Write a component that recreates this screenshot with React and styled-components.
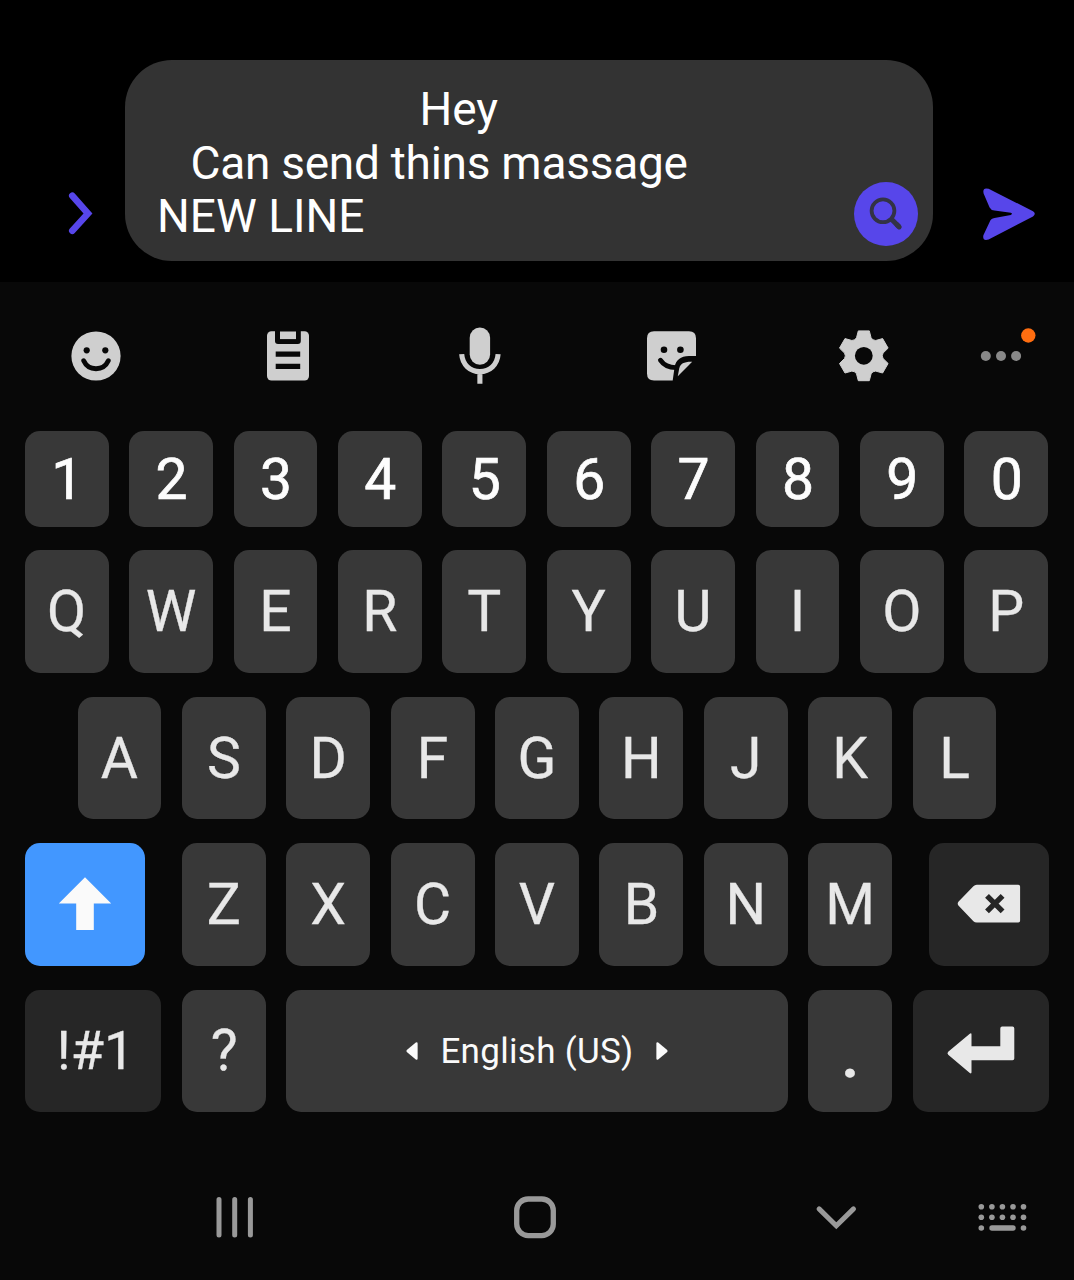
import React from "react";
import styled, { createGlobalStyle } from "styled-components";

const GlobalStyle = createGlobalStyle`
  *, *::before, *::after { box-sizing: border-box; }
  body { margin: 0; background: #080808; }
  button { border: 0; padding: 0; margin: 0; background: none; font: inherit; color: inherit; }
  svg { display: block; flex: none; overflow: visible; }
`;

const Screen = styled.main`
  display: flex;
  flex-direction: column;
  width: 1074px;
  height: 1280px;
  overflow: hidden;
  background: #080808;
  font-family: Roboto, "Liberation Sans", sans-serif;
`;

const Composer = styled.section`
  display: flex;
  align-items: flex-end;
  height: 282px;
  padding: 60px 0 21px 50px;
  background: #000;
`;

const ComposerButton = styled.button`
  display: flex;
  align-items: center;
  justify-content: center;
  width: 60px;
  height: 60px;
  margin: ${(p) => p.$margin};
`;

const Bubble = styled.div`
  display: flex;
  align-items: flex-end;
  justify-content: space-between;
  width: 808px;
  height: 201px;
  margin-left: 15px;
  padding: 0 15px 15px 32px;
  border-radius: 47px;
  background: #333;
`;

const Message = styled.div`
  padding-bottom: 2px;
  white-space: pre;
  color: #fff;
  font-size: 46px;
  line-height: 53.7px;
`;

const Line = styled.div`
  letter-spacing: ${(p) => p.$tracking || 0}px;
`;

const SearchButton = styled.button`
  display: flex;
  width: 64px;
  height: 64px;
  border-radius: 50%;
  background: #5746ea;
`;

const Toolbar = styled.div`
  display: flex;
  align-items: center;
  height: 149px;
  padding-bottom: 2px;
`;

const Tool = styled.button`
  display: flex;
  justify-content: center;
  width: ${(p) => p.$width || 192}px;
  color: #cfcfcf;
`;

const Keys = styled.div`
  display: flex;
  flex-direction: column;
  gap: 23.8px;
  padding: 0 24.8px;
`;

const KeyRow = styled.div`
  display: flex;
  justify-content: ${(p) => p.$justify || "flex-start"};
  gap: 20.6px;
  height: ${(p) => p.$height || 122.6}px;
`;

const KeyGroup = styled.div`
  display: flex;
  gap: 20.6px;
`;

const tones = { key: "#383838", dark: "#262626", blue: "#4297ff" };

const Key = styled.button`
  display: flex;
  align-items: center;
  justify-content: center;
  flex: none;
  width: ${(p) => p.$width || 83.8}px;
  height: 100%;
  padding: ${(p) => p.$pad || "0"};
  border-radius: 15px;
  background: ${(p) => tones[p.$tone || "key"]};
  color: ${(p) => p.$color || "#e8e8e8"};
  font-size: ${(p) => p.$size || 57}px;
  font-weight: ${(p) => p.$weight || 400};
  line-height: 1;
  -webkit-text-stroke: ${(p) => p.$stroke || 0.3}px currentColor;
`;

const SpaceKey = styled(Key)`
  gap: 22px;
  color: #fafafa;
  font-size: 35px;
  letter-spacing: 0.3px;
  -webkit-text-stroke: 0;
`;

const SpaceLabel = styled.span`
  padding-top: 2px;
`;

const NavBar = styled.nav`
  display: flex;
  align-items: center;
  flex: 1;
  padding: 44px 0 0 205px;
  color: #999;
`;

const NavButton = styled.button`
  display: flex;
  width: 60px;
  height: 60px;
  margin-right: ${(p) => p.$after || 0}px;
`;

const Icon = ({ w = 60, h = 60, children }) => (
  <svg width={w} height={h} viewBox={`0 0 ${w} ${h}`} fill="currentColor">
    {children}
  </svg>
);

const BG = "#080808";

const ExpandIcon = () => (
  <Icon>
    <path d="M22.3 11.8 38 29.5 22.3 46.8" fill="none" stroke="#5746ea" strokeWidth="6.6" strokeLinecap="round" strokeLinejoin="miter" />
  </Icon>
);

const SearchIcon = () => (
  <Icon w={64} h={64}>
    <g fill="none" stroke="#333345">
      <circle cx="29" cy="28.8" r="11.4" strokeWidth="3.8" />
      <path d="M37.3 37 45 44.7" strokeWidth="5" />
      <path d="M43 42.7 45.2 44.9" strokeWidth="5" strokeLinecap="round" />
    </g>
  </Icon>
);

const SendIcon = () => (
  <Icon>
    <path
      d="M8.6 4.8 53 27.2Q56.6 29.8 53 32.4L8.6 55.6Q2.2 57.6 3.4 51.2L9.5 38.2Q10.8 34.6 14.5 34.1L30.8 30.9Q33.2 29.8 30.8 28.8L14.5 26.6Q11 26.1 9.6 23.4L3.6 9.4Q2.2 3 8.6 4.8Z"
      fill="#5746ea"
    />
  </Icon>
);

const EmojiIcon = () => (
  <Icon>
    <circle cx="30" cy="30" r="24.6" />
    <circle cx="20.7" cy="24.3" r="3.1" fill={BG} />
    <circle cx="39.3" cy="24.3" r="3.1" fill={BG} />
    <path d="M17.7 34.8A13.5 13.5 0 0 0 42.3 34.8" fill="none" stroke={BG} strokeWidth="4.8" strokeLinecap="round" />
  </Icon>
);

const ClipboardIcon = () => (
  <Icon>
    <rect x="9" y="5.3" width="42" height="49.3" rx="4.5" />
    <path d="M17 5H42.8V15Q42.8 18 39.8 18H20Q17 18 17 15Z" fill={BG} />
    <rect x="22" y="5.5" width="16" height="7.6" />
    <path d="M17.7 25.4H42.2V30.7H17.7ZM17.7 37.7H42.2V43H17.7Z" fill={BG} />
  </Icon>
);

const MicIcon = () => (
  <Icon>
    <rect x="19.7" y="1.6" width="20.4" height="37.2" rx="10.2" />
    <path d="M11.7 28.2C12.4 38.6 20 45.6 29.9 45.6S47.4 38.6 48.1 28.2M29.9 45V57.8" fill="none" stroke="currentColor" strokeWidth="5.1" />
  </Icon>
);

const StickerIcon = () => (
  <Icon>
    <path d="M12 5.3H47Q54 5.3 54 12.3V30.1H47C38.5 30.1 34 34.3 32.6 41L30.7 54.4H12Q5 54.4 5 47.4V12.3Q5 5.3 12 5.3Z" />
    <circle cx="22" cy="23.7" r="3.3" fill={BG} />
    <circle cx="38.4" cy="23.7" r="3.3" fill={BG} />
    <path d="M18.4 34.2Q23.6 42 35 41.6" fill="none" stroke={BG} strokeWidth="4.8" strokeLinecap="round" />
    <path d="M50.2 35.7C42 35.5 38.4 37.5 37.2 42.4L35.8 50.2Z" />
  </Icon>
);

/* One sixth of the gear outline, turned around the centre for each tooth. */
const gearPath = (() => {
  const turn = ([x, y], k) => {
    const a = (k * Math.PI) / 3;
    const px = 29.8 + x * Math.cos(a) - y * Math.sin(a);
    const py = 29.8 + x * Math.sin(a) + y * Math.cos(a);
    return `${px.toFixed(2)} ${py.toFixed(2)}`;
  };
  let d = "";
  for (let k = 0; k < 6; k += 1) {
    d += `${k ? "L" : "M"}${turn([-5.5, -24.9], k)}L${turn([5.5, -24.9], k)}L${turn([7.3, -18], k)}`;
    d += `Q${turn([8.8, -15.3], k)} ${turn([-7.3, -18], k + 1)}`;
  }
  return `${d}Z`;
})();

const GearIcon = () => (
  <Icon>
    <path d={gearPath} stroke="currentColor" strokeWidth="1" strokeLinejoin="round" />
    <circle cx="29.8" cy="29.8" r="8.9" fill={BG} />
  </Icon>
);

const MoreIcon = () => (
  <Icon>
    <g fill="#888">
      <circle cx="14.8" cy="30" r="5" />
      <circle cx="30" cy="30" r="5" />
      <circle cx="45.1" cy="30" r="5" />
    </g>
    <circle cx="57.3" cy="9.5" r="7.2" fill="#ff6d10" />
  </Icon>
);

const ShiftIcon = () => (
  <Icon>
    <path d="M30 3.2 56.2 29.6H38.8V56H21.2V29.6H3.8Z" fill="#fafafa" />
  </Icon>
);

const BackspaceIcon = () => (
  <Icon w={64} h={60}>
    <path d="M1.4 27.8 16.4 12.2Q17.8 10.7 19.8 10.7H61.3Q63.1 10.7 63.1 12.5V46.8Q63.1 48.6 61.3 48.6H19.8Q17.8 48.6 16.4 47.2L1.4 31.4Q0 29.6 1.4 27.8Z" />
    <path d="M30 21.8 45.6 37.4M45.6 21.8 30 37.4" stroke="#262626" strokeWidth="5.4" fill="none" />
  </Icon>
);

const EnterIcon = () => (
  <Icon w={68} h={60}>
    <path d="M1.2 30.8 22.8 12.7Q24.5 11.4 24.5 13.6V25.3H53.3V7.4Q53.3 5.6 55.1 5.6H65.5Q67.3 5.6 67.3 7.4V37.5Q67.3 39.3 65.5 39.3H24.5V51.3Q24.5 53.2 22.8 52L1.2 33.8Q-.3 32.3 1.2 30.8Z" />
  </Icon>
);

const ArrowIcon = ({ flip }) => (
  <Icon w={12} h={18}>
    <path
      d="M.8 8 9.8.4Q11.6-.4 11.6 1.5V16.5Q11.6 18.4 9.8 17.6L.8 10Q0 9 .8 8Z"
      transform={flip ? "matrix(-1 0 0 1 12 0)" : undefined}
    />
  </Icon>
);

const RecentsIcon = () => (
  <Icon>
    <path d="M14 11.6V47M29.7 11.6V47M45.4 11.6V47" stroke="currentColor" strokeWidth="5" strokeLinecap="round" />
  </Icon>
);

const HomeIcon = () => (
  <Icon>
    <rect x="11.7" y="11" width="36.6" height="36.6" rx="11.5" fill="none" stroke="currentColor" strokeWidth="5.3" />
  </Icon>
);

const HideIcon = () => (
  <Icon>
    <path d="M13.1 20.9 30.3 37.7 47.5 20.9" fill="none" stroke="currentColor" strokeWidth="5" strokeLinecap="round" />
  </Icon>
);

const KeyboardIcon = () => (
  <Icon>
    {[9.3, 19.9, 30.4, 41, 51.5].map((x, i) => (
      <React.Fragment key={x}>
        <circle cx={x} cy="18.7" r="2.8" />
        <circle cx={x} cy="29.3" r="2.8" />
        {(i === 0 || i === 4) && <circle cx={x} cy="40" r="2.8" />}
      </React.Fragment>
    ))}
    <rect x="17.3" y="37.3" width="26.4" height="5.4" rx="2.7" />
  </Icon>
);

const letters = (text) => text.split("").map((c) => <Key key={c}>{c}</Key>);

export default function App() {
  return (
    <Screen>
      <GlobalStyle />
      <Composer>
        <ComposerButton $margin="0 0 17px 0" aria-label="Expand"><ExpandIcon /></ComposerButton>
        <Bubble>
          <Message>
            <Line>{" ".repeat(23)}Hey</Line>
            <Line $tracking={-0.26}>{"   "}Can send thins massage</Line>
            <Line>NEW LINE</Line>
          </Message>
          <SearchButton aria-label="Search"><SearchIcon /></SearchButton>
        </Bubble>
        <ComposerButton $margin="0 0 17px 47px" aria-label="Send"><SendIcon /></ComposerButton>
      </Composer>

      <Toolbar>
        <Tool aria-label="Emoji"><EmojiIcon /></Tool>
        <Tool aria-label="Clipboard"><ClipboardIcon /></Tool>
        <Tool aria-label="Voice"><MicIcon /></Tool>
        <Tool aria-label="Stickers"><StickerIcon /></Tool>
        <Tool aria-label="Settings"><GearIcon /></Tool>
        <Tool $width={82} aria-label="More"><MoreIcon /></Tool>
      </Toolbar>

      <Keys>
        <KeyRow $height={95.6}>
          {"1234567890".split("").map((c) => (
            <Key key={c} $color="#fdfdfd" $pad="1px 0 0 1px" $stroke={0.7}>{c}</Key>
          ))}
        </KeyRow>
        <KeyRow>{letters("QWERTYUIOP")}</KeyRow>
        <KeyRow $justify="center">{letters("ASDFGHJKL")}</KeyRow>
        <KeyRow $justify="space-between">
          <Key $tone="blue" $width={120.6} aria-label="Shift"><ShiftIcon /></Key>
          <KeyGroup>{letters("ZXCVBNM")}</KeyGroup>
          <Key $tone="dark" $width={120.6} aria-label="Backspace"><BackspaceIcon /></Key>
        </KeyRow>
        <KeyRow $justify="space-between">
          <Key $tone="dark" $width={136.4} $size={54} $pad="0 0 0 5px">!#1</Key>
          <Key $pad="0 0 1px 1px">?</Key>
          <SpaceKey $width={501.6}>
            <ArrowIcon />
            <SpaceLabel>English (US)</SpaceLabel>
            <ArrowIcon flip />
          </SpaceKey>
          <Key $size={60} $weight={700} $pad="12px 0 0 0">.</Key>
          <Key $tone="dark" $width={136.4} aria-label="Enter"><EnterIcon /></Key>
        </KeyRow>
      </Keys>

      <NavBar>
        <NavButton $after={240} aria-label="Recents"><RecentsIcon /></NavButton>
        <NavButton $after={241} aria-label="Home"><HomeIcon /></NavButton>
        <NavButton $after={106} aria-label="Hide keyboard"><HideIcon /></NavButton>
        <NavButton aria-label="Switch keyboard"><KeyboardIcon /></NavButton>
      </NavBar>
    </Screen>
  );
}
